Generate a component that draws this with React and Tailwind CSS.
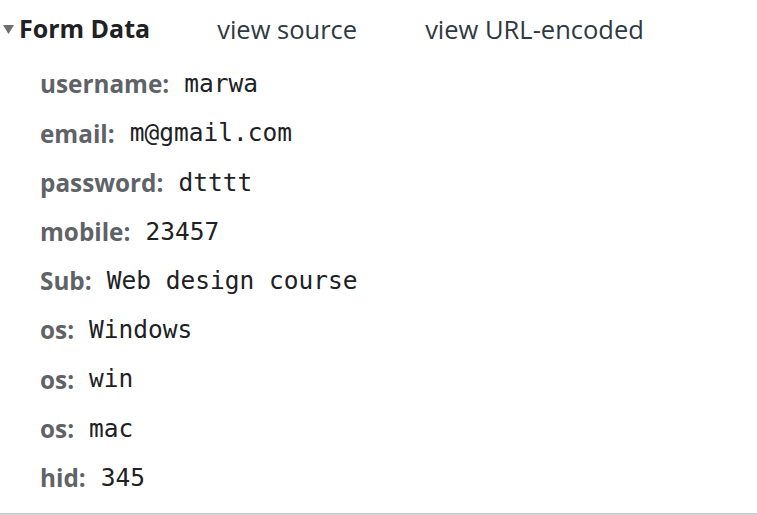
const rows = [
  ["username", "marwa"],
  ["email", "m@gmail.com"],
  ["password", "dtttt"],
  ["mobile", "23457"],
  ["Sub", "Web design course"],
  ["os", "Windows"],
  ["os", "win"],
  ["os", "mac"],
  ["hid", "345"],
];

export default function App() {
  return (
    <div className="h-[515px] w-[757px] bg-white font-['Open_Sans',sans-serif]">
      <div className="border-b-2 border-[#cacdd1] pb-[10px]">
        <div className="flex h-[60px] items-center pb-[2px]">
          <svg className="ml-[3px] mr-[5px]" width="11" height="9" viewBox="0 0 11 9">
            <path d="M0 0 H11 L5.5 9 Z" fill="#6e6e6e" />
          </svg>
          <span className="text-[25px] font-bold text-[#202124]">Form Data</span>
          <span className="ml-[67px] text-[25.5px] text-[#303942]">view source</span>
          <span className="ml-[68px] text-[25.5px] text-[#303942]">view URL-encoded</span>
        </div>
        {rows.map(([name, value], i) => (
          <div key={i} className="flex h-[49.2px] items-center pl-[40px]">
            <span className="text-[24.3px] font-bold text-[#5f6368]">{name}:</span>
            <span className="ml-[15px] font-['DejaVu_Sans_Mono',monospace] text-[24.5px] text-[#202124]">
              {value}
            </span>
          </div>
        ))}
      </div>
    </div>
  );
}
